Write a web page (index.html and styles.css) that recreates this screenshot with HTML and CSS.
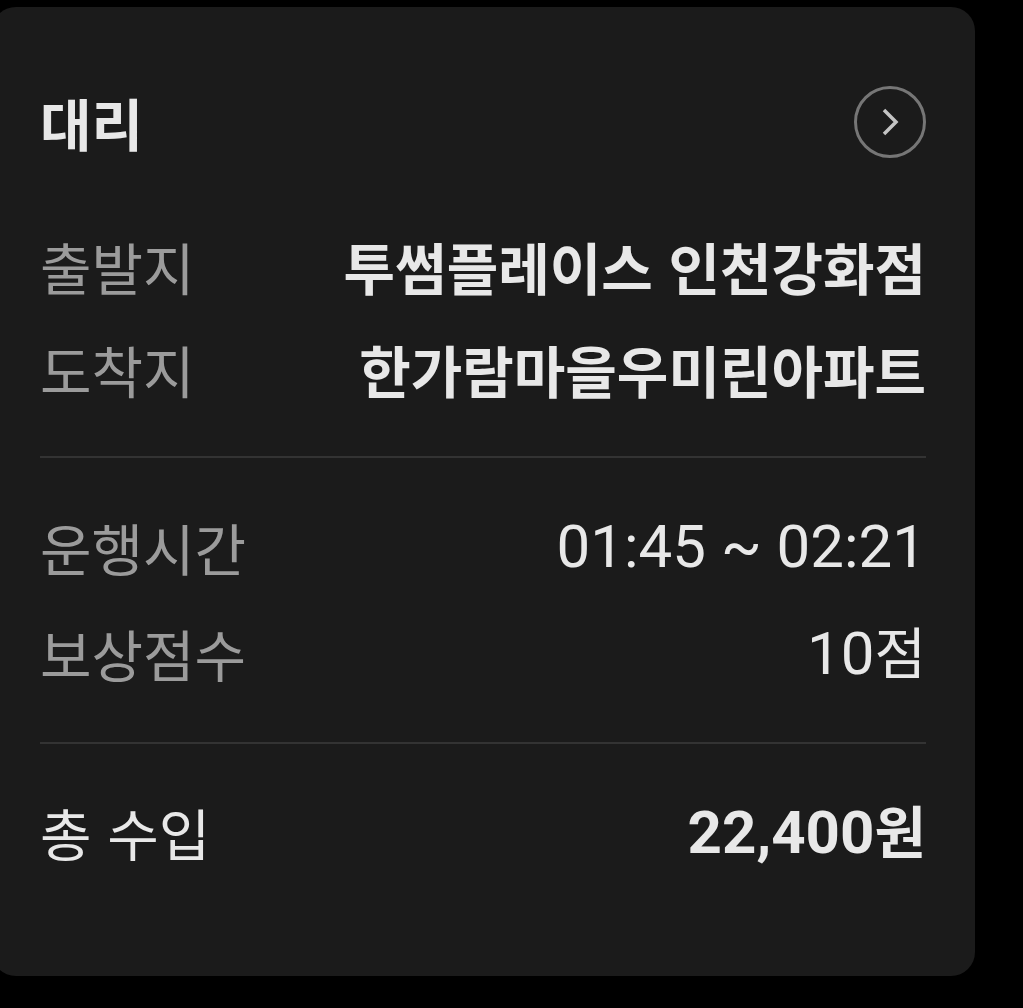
FILE: index.html
```html
<!DOCTYPE html>
<html lang="ko">
<head>
<meta charset="utf-8">
<link rel="stylesheet" href="styles.css">
</head>
<body>
<div class="card">
  <div class="head">
    <div class="title">대리</div>
    <div class="more">
      <svg width="72" height="72" viewBox="0 0 72 72">
        <circle cx="36" cy="36" r="34.5" fill="none" stroke="#767676" stroke-width="3"/>
        <path d="M30 24 L42 36 L30 48" fill="none" stroke="#c4c4c4" stroke-width="3.5" stroke-linecap="butt" stroke-linejoin="miter"/>
      </svg>
    </div>
  </div>
  <div class="section first">
    <div class="row"><span class="label">출발지</span><span class="value bold">투썸플레이스 인천강화점</span></div>
    <div class="row"><span class="label">도착지</span><span class="value bold">한가람마을우미린아파트</span></div>
  </div>
  <div class="divider"></div>
  <div class="section">
    <div class="row tall"><span class="label">운행시간</span><span class="value"><span class="num">01:45 ~ 02:21</span></span></div>
    <div class="row tall"><span class="label">보상점수</span><span class="value"><span class="num">10</span>점</span></div>
  </div>
  <div class="divider"></div>
  <div class="section">
    <div class="row"><span class="label white">총 수입</span><span class="value bold"><span class="num">22,400</span>원</span></div>
  </div>
</div>
</body>
</html>
```

FILE: styles.css
```css
html, body {
  margin: 0;
  padding: 0;
  background: #000;
}
body {
  font-family: "Noto Sans CJK KR", "Noto Sans", sans-serif;
  padding-top: 7px;
  height: 1008px;
  overflow: hidden;
}
.card {
  margin-left: -8px;
  width: 983px;
  height: 969px;
  box-sizing: border-box;
  background: #1b1b1b;
  border-radius: 24px;
  padding: 79px 49px 0 48px;
}
.head {
  display: flex;
  justify-content: space-between;
  align-items: center;
  height: 72px;
}
.title {
  font-size: 56px;
  font-weight: 700;
  color: #e8e8e8;
  line-height: 1;
}
.more {
  width: 72px;
  height: 72px;
  display: flex;
}
.section.first {
  margin-top: 56px;
}
.section {
  display: flex;
  flex-direction: column;
}
.row {
  height: 103px;
  display: flex;
  justify-content: space-between;
  align-items: center;
}
.row.tall {
  height: 106px;
}
.label {
  font-size: 56px;
  color: #9b9b9b;
  line-height: 1;
}
.label.white {
  color: #e8e8e8;
}
.value {
  font-size: 56px;
  color: #e8e8e8;
  line-height: 1;
  display: flex;
  align-items: baseline;
}
.bold {
  font-weight: 700;
}
.num {
  font-family: Roboto, "Noto Sans", sans-serif;
  font-size: 60px;
  white-space: pre;
}
.divider {
  height: 2px;
  background: #333333;
  margin: 36px 0 36px;
}
```
